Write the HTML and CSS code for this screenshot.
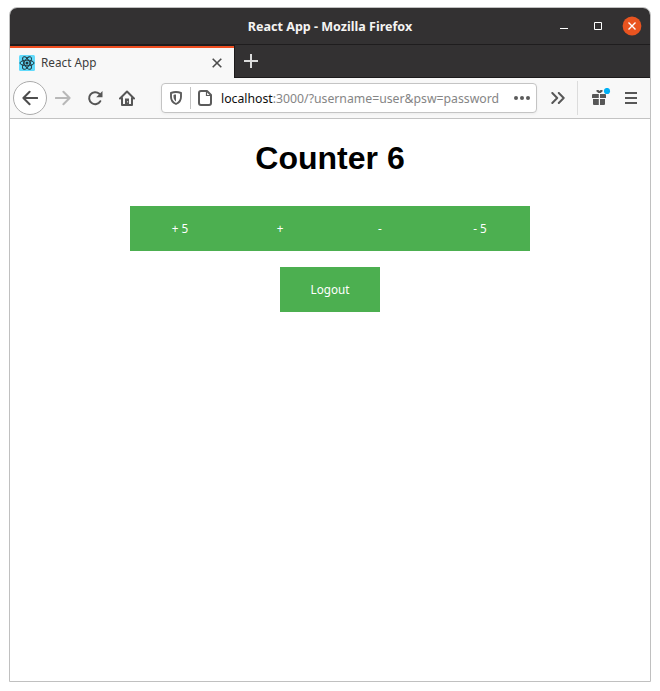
FILE: index.html
```html
<!DOCTYPE html>
<html lang="en">
<head>
<meta charset="utf-8">
<title>React App</title>
<link rel="stylesheet" href="styles.css">
</head>
<body>
<div class="window">
  <header class="titlebar">
    <span class="title">React App - Mozilla Firefox</span>
    <div class="controls">
      <svg width="10" height="20" viewBox="0 0 10 20"><path d="M1 12.500h8" stroke="#fff"/></svg>
      <svg width="10" height="20" viewBox="0 0 10 20"><path d="M1.500 6.500h7v7h-7z" fill="none" stroke="#fff"/></svg>
      <svg width="20" height="20" viewBox="0 0 20 20"><circle cx="10" cy="10" r="9.400" fill="#e95420"/><path d="M6.500 6.500l7 7m0-7l-7 7" stroke="#fff" stroke-width="1.400"/></svg>
    </div>
  </header>
  <div class="tabs">
    <div class="tab">
      <svg width="16" height="16" viewBox="0 0 16 16"><rect width="16" height="16" rx="1.500" fill="#61dafb"/><g fill="none" stroke="#20333b" stroke-width=".95"><ellipse cx="8" cy="8" rx="7" ry="2.800"/><ellipse cx="8" cy="8" rx="7" ry="2.800" transform="rotate(60 8 8)"/><ellipse cx="8" cy="8" rx="7" ry="2.800" transform="rotate(120 8 8)"/></g><circle cx="8" cy="8" r="1.500" fill="#20333b"/></svg>
      <span class="tab-name">React App</span>
      <svg class="tab-close" width="10" height="10" viewBox="0 0 10 10"><path d="M.7.700l8.600 8.600m0-8.600L.7 9.300" stroke="#4c4c4c" stroke-width="1.600"/></svg>
    </div>
    <div class="new-tab"><svg width="14" height="14" viewBox="0 0 14 14"><path d="M0 7h14M7 0v14" stroke="#dcdcdc" stroke-width="2"/></svg></div>
  </div>
  <nav class="toolbar">
    <div class="back"><svg width="16" height="16" viewBox="0 0 16 16"><path d="M15.200 8H1.800M7.600 1.800L1.400 8l6.200 6.200" fill="none" stroke="#4e4e4e" stroke-width="2" stroke-linecap="round" stroke-linejoin="round"/></svg></div>
    <svg class="forward" width="16" height="16" viewBox="0 0 16 16"><path d="M.8 8h13.400M8.400 1.800L14.600 8l-6.200 6.200" fill="none" stroke="#b8b8b8" stroke-width="2" stroke-linecap="round" stroke-linejoin="round"/></svg>
    <svg class="reload" width="16" height="16" viewBox="0 0 16 16"><path d="M13.300 11.200A6 6 0 1 1 12.300 3.800" fill="none" stroke="#565656" stroke-width="2" stroke-linecap="round"/><path d="M15.500.900v6.300H9.200z" fill="#565656"/></svg>
    <svg class="home" width="16" height="16" viewBox="0 0 16 16"><path d="M1 8.500L8 1.500l7 7M3 8v7h10V8" fill="none" stroke="#565656" stroke-width="2" stroke-linecap="round" stroke-linejoin="round"/><path d="M6 15V8.500h4V15z" fill="#565656"/><path d="M8.300 11h.8v1.500h-.8z" fill="#f8f8f8"/></svg>
    <div class="url-box">
      <svg class="shield" width="14" height="14" viewBox="0 0 14 14"><path d="M7 1c2 0 3.500.4 5 1v3.700c0 3.700-2 6-5 7.300-3-1.300-5-3.600-5-7.300V2c1.500-.6 3-1 5-1z" fill="none" stroke="#5b5b5b" stroke-width="1.900" stroke-linejoin="round"/><path d="M7 3.500v7C5.300 9.400 4.500 7.800 4.500 5.600V3.900C5.300 3.600 6 3.500 7 3.500z" fill="#5b5b5b"/></svg>
      <i class="divider"></i>
      <svg class="page-icon" width="14" height="16" viewBox="0 0 14 16"><path d="M3 1h6l4 4v8a2 2 0 0 1-2 2H3a2 2 0 0 1-2-2V3a2 2 0 0 1 2-2z" fill="none" stroke="#5b5b5b" stroke-width="2" stroke-linejoin="round"/><path d="M8.500 1.500v4H12.500" fill="none" stroke="#5b5b5b" stroke-width="1.200"/></svg>
      <span class="url"><b>localhost</b>:3000/?username=user&amp;psw=password</span>
      <svg class="dots" width="16" height="4" viewBox="0 0 16 4"><g fill="#5b5b5b"><circle cx="2" cy="2" r="2"/><circle cx="8" cy="2" r="2"/><circle cx="14" cy="2" r="2"/></g></svg>
    </div>
    <svg class="more" width="14" height="12" viewBox="0 0 14 12"><path d="M1.300 1L6.200 6l-4.900 5M7.800 1l4.900 5-4.900 5" fill="none" stroke="#585858" stroke-width="2" stroke-linecap="round" stroke-linejoin="round"/></svg>
    <i class="bar-divider"></i>
    <svg class="gift" width="20" height="18" viewBox="0 0 20 18"><path d="M1 6h5.800v4H0V7a1 1 0 0 1 1-1zM8 6h5a1 1 0 0 1 1 1v3H8zM1 11h5.800v6H2a1 1 0 0 1-1-1zM8 11h5v5a1 1 0 0 1-1 1H8zM4.500 2h2l1 1 1-1h2v1.500L8.700 5H6.300L4.500 3.500z" fill="#575757"/><circle cx="15" cy="3" r="3.100" fill="#00b0f5"/></svg>
    <svg class="menu" width="12" height="12" viewBox="0 0 12 12"><path d="M0 1h12M0 6h12M0 11h12" stroke="#575757" stroke-width="2"/></svg>
  </nav>
  <main class="content">
    <h1>Counter 6</h1>
    <div class="buttons"><button>+ 5</button><button>+</button><button>-</button><button>- 5</button></div>
    <button>Logout</button>
  </main>
</div>
</body>
</html>
```
FILE: styles.css
```css
* { box-sizing: border-box; }
body { margin: 0; padding: 7px 9px 9px; background: #fff; font-family: "Noto Sans", sans-serif; }
svg { display: block; flex: none; }
.window { width: 642px; height: 675px; border: 1px solid #c0c0c0; border-radius: 8px 8px 0 0; overflow: hidden; display: flex; flex-direction: column; background: #fff; }
.titlebar { height: 37px; flex: none; background: #333132; border-bottom: 1px solid #1f1d1e; display: grid; grid-template-columns: 1fr auto 1fr; align-items: center; color: #f5f4f2; }
.title { grid-column: 2; padding-top: 2px; font-size: 12.55px; line-height: 18px; font-weight: 700; white-space: nowrap; }
.controls { display: flex; justify-content: flex-end; align-items: center; gap: 24px; padding-right: 8px; }
.controls svg:last-child { margin-left: -5px; }
.tabs { height: 33px; flex: none; display: flex; background: #333132; }
.tab { width: 224px; border-top: 2px solid #f04e21; box-shadow: 0 -1px #1f1d1e; background: #f8f8f8; display: flex; align-items: center; padding: 0 12px 1px 9px; margin-top: 1px; }
.tab-name { flex: 1; margin-left: 6px; padding-bottom: 1px; font-size: 11.75px; line-height: 16px; color: #3c3c3c; }
.new-tab { flex: 1; display: flex; align-items: center; padding: 0 9px; border-left: 1px solid #1c1a1b; border-bottom: 1px solid #1c1a1b; }
.toolbar { height: 41px; flex: none; background: #f8f8f8; border-bottom: 1px solid #c3c3c3; display: flex; align-items: center; }
.back { width: 34px; height: 34px; margin-left: 3px; border: 1px solid #ababab; border-radius: 50%; background: #fff; display: flex; align-items: center; justify-content: center; }
.forward { margin-left: 8px; }
.reload, .home { margin-left: 16px; }
.url-box { width: 376px; height: 30px; margin-left: 26px; background: #fff; border: 1px solid #c4c4c4; border-radius: 4px; display: flex; align-items: center; box-shadow: 0 1px 3px #0000000d; }
.shield { margin-left: 7px; }
.divider { width: 1px; height: 22px; margin-left: 7px; background: #c4c4c4; }
.page-icon { margin-left: 7px; }
.url { flex: 1; margin-left: 9px; padding-top: 2px; font-size: 12.25px; line-height: 18px; color: #858585; white-space: nowrap; }
.url b { font-weight: 400; color: #0c0c0c; }
.dots { margin-right: 6px; }
.more { margin-left: 14px; }
.bar-divider { width: 1px; height: 34px; margin-left: 12px; background: #dcdcdc; }
.gift { margin-left: 14px; margin-top: -2px; }
.menu { margin-left: 13px; }
.content { flex: 1; display: flex; flex-direction: column; align-items: center; }
h1 { margin: 21px 0 30px; font: 700 32px/36px "Liberation Sans", Arial, sans-serif; color: #000; }
.buttons { display: flex; margin-bottom: 16px; }
button { width: 100px; height: 45px; padding: 0; border: 0; background: #4caf50; color: #fff; font: 11.7px/17px "Noto Sans", sans-serif; }
```
